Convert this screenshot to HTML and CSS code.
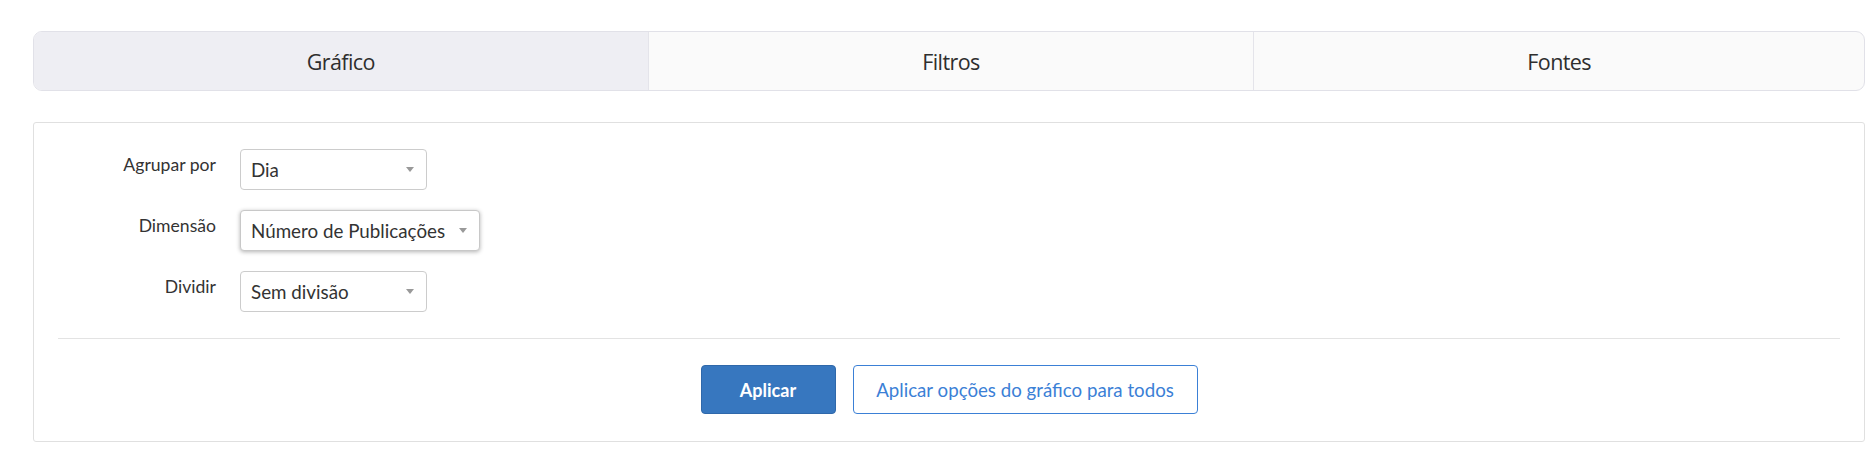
FILE: index.html
```html
<!DOCTYPE html>
<html lang="pt">
<head>
<meta charset="utf-8">
<link rel="stylesheet" href="styles.css">
</head>
<body>
<div class="page">
  <nav class="tabs">
    <div class="tab active">Gráfico</div>
    <div class="tab">Filtros</div>
    <div class="tab">Fontes</div>
  </nav>
  <section class="panel">
    <div class="form">
      <label class="label">Agrupar por</label>
      <div class="select"><span>Dia</span><i class="caret"></i></div>
      <label class="label">Dimensão</label>
      <div class="select focused"><span>Número de Publicações</span><i class="caret"></i></div>
      <label class="label">Dividir</label>
      <div class="select"><span>Sem divisão</span><i class="caret"></i></div>
    </div>
    <hr class="sep">
    <div class="actions">
      <button class="btn primary">Aplicar</button>
      <button class="btn outline">Aplicar opções do gráfico para todos</button>
    </div>
  </section>
</div>
</body>
</html>
```
FILE: styles.css
```css
* { box-sizing: border-box; }
html, body { margin: 0; padding: 0; background: #fff; }
body { font-family: Lato, "Liberation Sans", sans-serif; color: #333; }
.page { padding: 31px 6px 0 33px; }

.tabs {
  display: flex;
  height: 60px;
  border: 1px solid #e1e1e8;
  border-radius: 9px;
  overflow: hidden;
  background: #fafafa;
}
.tab {
  flex: 611 1 0;
  display: flex;
  align-items: center;
  justify-content: center;
  font-family: "Open Sans", sans-serif;
  font-size: 21.5px;
  letter-spacing: -0.6px;
  color: #2e2e2e;
  border-left: 1px solid #e4e4ea;
}
.tab:first-child { border-left: 0; flex-grow: 615; }
.tab:nth-child(2) { flex-grow: 606; }
.tab.active { background: #eeeef3; }

.panel {
  margin-top: 31px;
  border: 1px solid #e0e0e0;
  border-radius: 3px;
  padding: 26px 24px 27px 24px;
}
.form {
  display: grid;
  grid-template-columns: 158px auto;
  column-gap: 24px;
  row-gap: 20px;
  justify-content: start;
}
.label {
  justify-self: end;
  padding-top: 5px;
  font-size: 17.6px;
  color: #333;
}
.select {
  justify-self: start;
  min-width: 187px;
  height: 41px;
  display: flex;
  align-items: center;
  gap: 14px;
  padding: 0 12px 0 10px;
  border: 1px solid #cccccc;
  border-radius: 4px;
  font-size: 18.8px;
  color: #333;
  background: #fff;
}
.select span { flex: 1; white-space: nowrap; }
.select.focused { box-shadow: 0 1px 4px rgba(0,0,0,0.3); border-color: #c8c8c8; }
.caret {
  width: 0; height: 0;
  border-left: 4px solid transparent;
  border-right: 4px solid transparent;
  border-top: 5px solid #999;
}
.sep {
  margin: 26px 0 0;
  border: 0;
  border-top: 1px solid #e3e3e3;
}
.actions {
  display: flex;
  justify-content: center;
  gap: 17px;
  margin-top: 26px;
}
.btn {
  height: 49px;
  border-radius: 4px;
  font-family: Lato, "Liberation Sans", sans-serif;
  font-size: 18.7px;
  cursor: pointer;
}
.btn.primary {
  width: 135px;
  background: #3777bf;
  border: 1px solid #2f68aa;
  color: #fff;
  font-weight: 700;
  font-size: 18px;
}
.btn.outline {
  width: 345px;
  background: #fff;
  border: 1px solid #3b80d6;
  color: #3b80d6;
}
```
